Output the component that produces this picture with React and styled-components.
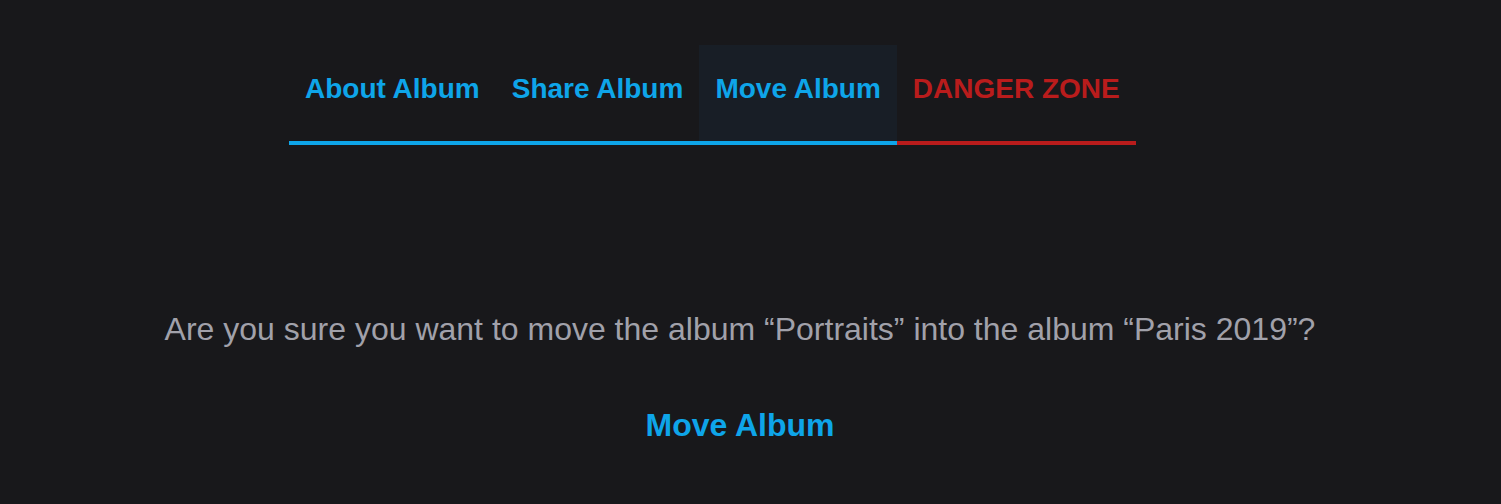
import React from 'react'
import styled, { createGlobalStyle } from 'styled-components'

const GlobalStyle = createGlobalStyle`
  html, body {
    margin: 0;
    padding: 0;
    background: #18181b;
    font-family: "Liberation Sans", Arial, sans-serif;
  }
`

const Page = styled.div`
  min-height: 504px;
  background: #18181b;
  padding-top: 45px;
  box-sizing: border-box;
`

const TabBar = styled.nav`
  display: flex;
  margin-left: 289px;
`

const Tab = styled.button`
  border: none;
  outline: none;
  background: ${p => (p.active ? '#181e26' : 'transparent')};
  color: ${p => (p.danger ? '#b91c1c' : '#0ea5e9')};
  border-bottom: 4px solid ${p => (p.danger ? '#b91c1c' : '#0ea5e9')};
  font-family: inherit;
  font-size: 28px;
  font-weight: 700;
  line-height: 32px;
  height: 100px;
  padding: 28px 16px 36px;
  margin: 0;
  box-sizing: border-box;
  cursor: pointer;
`

const Body = styled.div`
  display: flex;
  flex-direction: column;
  align-items: center;
  width: 1480px;
  padding-top: 160px;
`

const Question = styled.p`
  margin: 0;
  color: #a1a1aa;
  font-size: 32px;
  line-height: 48px;
`

const Action = styled.button`
  border: none;
  outline: none;
  background: transparent;
  color: #0ea5e9;
  font-family: inherit;
  font-size: 32px;
  font-weight: 700;
  line-height: 48px;
  margin-top: 48px;
  padding: 0;
  cursor: pointer;
`

const tabs = [
  { label: 'About Album' },
  { label: 'Share Album' },
  { label: 'Move Album', active: true },
  { label: 'DANGER ZONE', danger: true },
]

function App() {
  return (
    <Page>
      <GlobalStyle />
      <TabBar>
        {tabs.map(t => (
          <Tab key={t.label} active={t.active} danger={t.danger}>
            {t.label}
          </Tab>
        ))}
      </TabBar>
      <Body>
        <Question>Are you sure you want to move the album “Portraits” into the album “Paris 2019”?</Question>
        <Action>Move Album</Action>
      </Body>
    </Page>
  )
}

export default App
